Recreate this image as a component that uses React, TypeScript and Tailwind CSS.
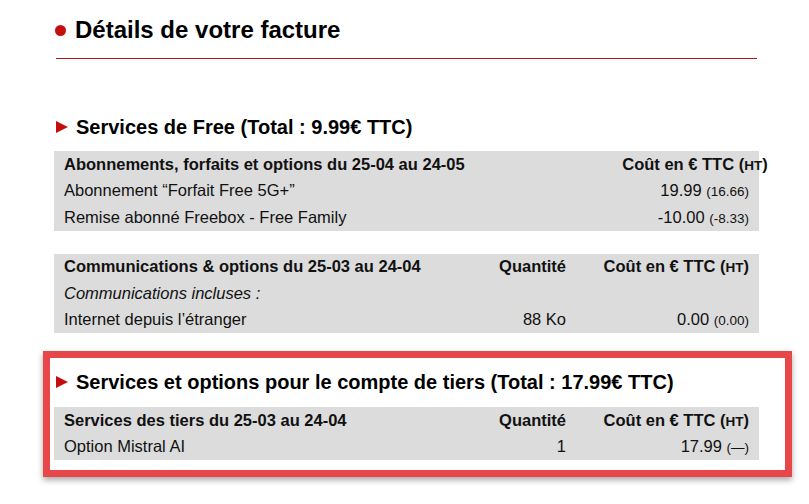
import React from "react";

type Row = {
  label: React.ReactNode;
  qty?: React.ReactNode;
  cost?: React.ReactNode;
  bold?: boolean;
};

const Ht = ({ children }: { children: React.ReactNode }) => (
  <span className="text-[13.5px]">{children}</span>
);

const headerCost = (
  <>
    Coût en € TTC (<Ht>HT</Ht>)
  </>
);

const BillTable: React.FC<{ rows: Row[] }> = ({ rows }) => (
  <div className="w-[705px] bg-[#dcdcdc] text-[16.5px] text-[#111]">
    {rows.map((row, i) => (
      <div
        key={i}
        className={
          "grid h-[26.5px] grid-cols-[1fr_120px_183px] items-center px-[10px] " +
          (row.bold ? "font-bold" : "")
        }
      >
        <div className="whitespace-nowrap">{row.label}</div>
        <div className="text-right whitespace-nowrap">{row.qty}</div>
        <div className="text-right whitespace-nowrap">{row.cost}</div>
      </div>
    ))}
  </div>
);

const SectionTitle: React.FC<{ children: React.ReactNode }> = ({ children }) => (
  <h2 className="flex h-[22px] items-center text-[20px] font-bold leading-[22px] text-black">
    <span className="mr-[8px] h-0 w-0 border-y-[6px] border-l-[12px] border-y-transparent border-l-[#c40f0f]" />
    {children}
  </h2>
);

export default function App() {
  return (
    <div
      className="h-[504px] w-[809px] overflow-hidden bg-white pl-[54px] pt-[17px]"
      style={{ fontFamily: '"Liberation Sans", Arial, sans-serif' }}
    >
      <h1 className="flex h-[26px] items-center text-[24px] font-bold leading-[26px] text-black">
        <span className="ml-[1px] mr-[9px] h-[11px] w-[11px] rounded-full bg-[#c40f0f]" />
        Détails de votre facture
      </h1>
      <div className="ml-[2px] mt-[15px] h-px w-[701px] bg-[#a61c1c]" />

      <div className="mt-[57px] pl-[2px]">
        <SectionTitle>Services de Free (Total : 9.99€ TTC)</SectionTitle>
      </div>
      <div className="mt-[13px]">
        <BillTable
          rows={[
            {
              label: "Abonnements, forfaits et options du 25-04 au 24-05",
              cost: headerCost,
              bold: true,
            },
            {
              label: "Abonnement “Forfait Free 5G+”",
              cost: (
                <>
                  19.99 <Ht>(16.66)</Ht>
                </>
              ),
            },
            {
              label: "Remise abonné Freebox - Free Family",
              cost: (
                <>
                  -10.00 <Ht>(-8.33)</Ht>
                </>
              ),
            },
          ]}
        />
      </div>

      <div className="mt-[23px]">
        <BillTable
          rows={[
            {
              label: "Communications & options du 25-03 au 24-04",
              qty: "Quantité",
              cost: headerCost,
              bold: true,
            },
            { label: <i>Communications incluses :</i> },
            {
              label: "Internet depuis l’étranger",
              qty: "88 Ko",
              cost: (
                <>
                  0.00 <Ht>(0.00)</Ht>
                </>
              ),
            },
          ]}
        />
      </div>

      <div className="ml-[-11px] mt-[18px] w-[749px] border-[7px] border-[#e8474a] bg-white pb-[10px] pl-[4px] pt-[13px] shadow-[0_3px_6px_rgba(0,0,0,0.35)]">
        <div className="pl-[2px]">
          <SectionTitle>
            Services et options pour le compte de tiers (Total : 17.99€ TTC)
          </SectionTitle>
        </div>
        <div className="mt-[14px]">
          <BillTable
            rows={[
              {
                label: "Services des tiers du 25-03 au 24-04",
                qty: "Quantité",
                cost: headerCost,
                bold: true,
              },
              {
                label: "Option Mistral AI",
                qty: "1",
                cost: (
                  <>
                    17.99 <Ht>(—)</Ht>
                  </>
                ),
              },
            ]}
          />
        </div>
      </div>
    </div>
  );
}
